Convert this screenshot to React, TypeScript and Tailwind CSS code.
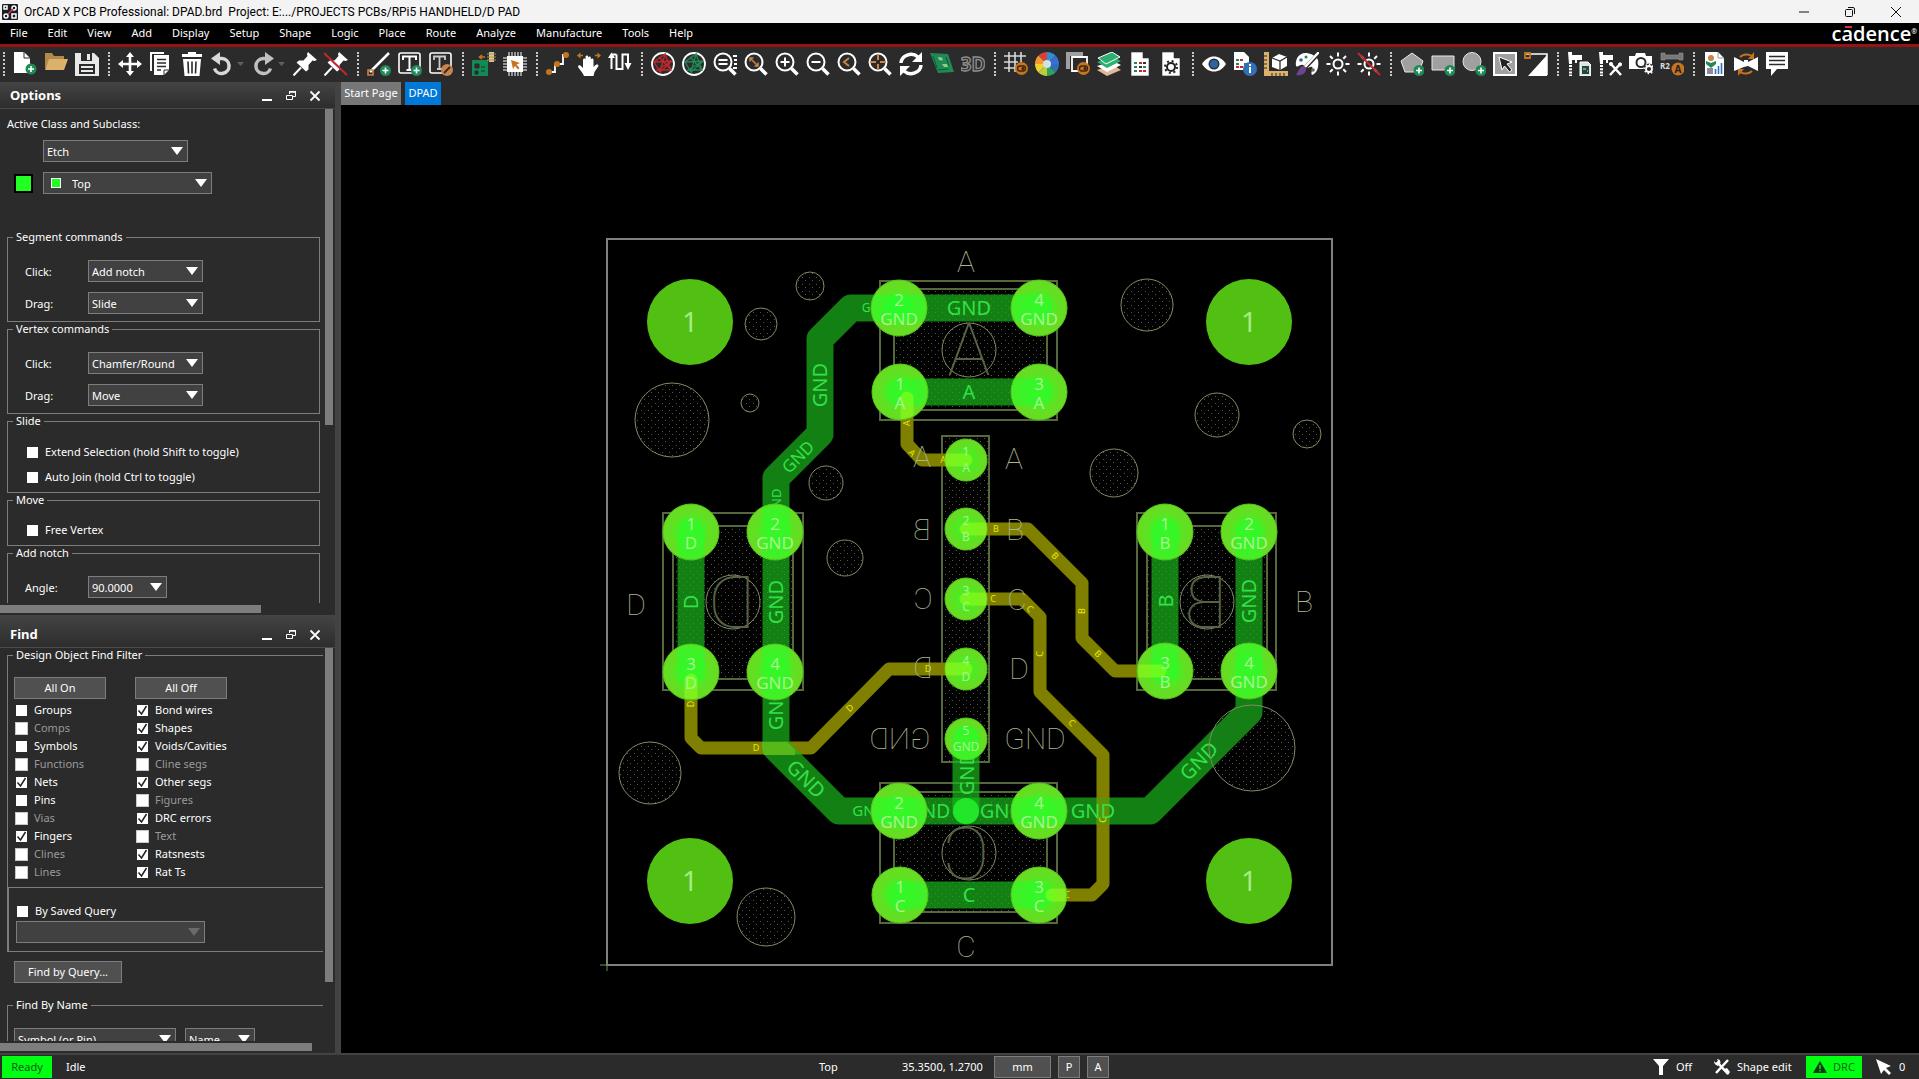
import React, { useState } from "react";

type Pad = {
  x: number;
  y: number;
  pin: string;
  net: string;
  small?: boolean;
};

type Label = [text: string, x: number, y: number, rotate: number, size: number];

const MENUS = [
  "File",
  "Edit",
  "View",
  "Add",
  "Display",
  "Setup",
  "Shape",
  "Logic",
  "Place",
  "Route",
  "Analyze",
  "Manufacture",
  "Tools",
  "Help",
];

/* ---------- toolbar icons, all on a 24x24 grid ---------- */

const Plus = ({ x = 18, y = 18 }) => (
  <g>
    <circle cx={x} cy={y} r="5.5" fill="#1f8a56" />
    <path d={`M${x - 3} ${y}h6M${x} ${y - 3}v6`} stroke="#fff" strokeWidth="1.6" />
  </g>
);

const Lens = ({ children }: { children?: React.ReactNode }) => (
  <g fill="none" stroke="#fff">
    <circle cx="10" cy="10" r="8.5" strokeWidth="2" />
    <path d="M16.500 16.500L22.500 22.500" strokeWidth="3.500" />
    {children}
  </g>
);

const Toggle = () => (
  <g>
    <circle cx="17.500" cy="16.500" r="6.500" fill="#c8741f" />
    <rect x="13.500" y="14" width="8" height="5" rx="2.500" fill="none" stroke="#3a2410" strokeWidth="1.300" />
    <circle cx="19" cy="16.500" r="1.500" fill="#3a2410" />
  </g>
);

const Sun = () => (
  <g fill="none" stroke="#fff" strokeWidth="2">
    <circle cx="12" cy="12" r="4.500" />
    <path d="M12 0.500v4M12 19.500v4M0.500 12h4M19.500 12h4M4 4l2.700 2.700M17.300 17.300L20 20M4 20l2.700-2.700M17.300 6.700L20 4" />
  </g>
);

const Net = ({ color }: { color: string }) => (
  <g fill="none">
    <circle cx="12" cy="12" r="11" stroke="#fff" strokeWidth="1.800" />
    <path
      d="M3 10L14 2L9 20L3 10L21 9L6 18L20 18L14 2M8 5L20 18M21 9L9 20"
      stroke={color}
      strokeWidth="1.300"
    />
  </g>
);

const Caliper = () => (
  <g>
    <path d="M1 0h4v3h10v5h-5v3H8V8H5v4H2z" fill="#fff" />
    <path d="M3.500 13v11" stroke="#fff" strokeWidth="3" strokeDasharray="2 1.200" />
  </g>
);

const Pin = () => (
  <g>
    <path d="M15 0l9 8-2.500 1-2-.5-4 4.500v4.500L13 19.500 3.500 10.500 6 8.500h4.500l4-4.500-.5-2z" fill="#fff" />
    <path d="M8 15.500L0.500 23.500" stroke="#fff" strokeWidth="2" />
  </g>
);

const Page = () => <path d="M3 0h12l6 6v18H3z M15 0v6h6" fill="#fff" stroke="#2b2b2b" strokeWidth="0.600" />;

const ICONS: Record<string, React.ReactNode> = {
  "New drawing": (
    <>
      <path d="M1 0h10l6 6v15H1z" fill="#fff" />
      <path d="M11 0v6h6" fill="none" stroke="#2b2b2b" />
      <Plus x={18} y={17} />
    </>
  ),
  Open: (
    <>
      <path d="M1 17V1h7l2 3h10v4H6z" fill="#b08a48" />
      <path d="M5 7h19l-4 11H1z" fill="#dcb26a" />
    </>
  ),
  Save: (
    <>
      <path d="M0 1h19l5 5v18H0z" fill="#e8e8e8" />
      <path d="M6 1h11v8H6z" fill="#2b2b2b" />
      <path d="M12 2h3v6h-3z" fill="#e8e8e8" />
      <path d="M4 12h16v10H4z" fill="#2b2b2b" />
      <path d="M6 15h12M6 19h12" stroke="#e8e8e8" strokeWidth="2" />
    </>
  ),
  Move: (
    <path
      d="M12 0l4 5h-2.700v5.700H19V8l5 4-5 4v-2.700h-5.700V19H16l-4 5-4-5h2.700v-5.700H5V16l-5-4 5-4v2.700h5.700V5H8z"
      fill="#fff"
    />
  ),
  Copy: (
    <>
      <path d="M1 1h14M2 0v19" stroke="#fff" strokeWidth="2" fill="none" />
      <path d="M5 3h15v15l-5 5H5z" fill="#fff" />
      <path d="M8 7.500h9M8 11h9M8 14.500h9M8 18h4" stroke="#2b2b2b" strokeWidth="1.600" />
      <path d="M15 23v-5h5" fill="none" stroke="#2b2b2b" />
    </>
  ),
  Delete: (
    <>
      <path d="M8 0h8v2h6v3H2V2h6z" fill="#fff" />
      <path d="M3 7h18l-1.500 17h-15z" fill="#fff" />
      <path d="M8 9.500l.5 12M12 9.500v12M16 9.500l-.5 12" stroke="#2b2b2b" strokeWidth="1.600" />
    </>
  ),
  Undo: (
    <>
      <path d="M7 6.500h4a7.500 7.500 0 1 1-7.500 10" fill="none" stroke="#d8d8d8" strokeWidth="3.500" />
      <path d="M9 0v13L0 6.500z" fill="#d8d8d8" />
    </>
  ),
  Redo: (
    <>
      <path d="M15 6.500h-4a7.500 7.500 0 1 0 7.500 10" fill="none" stroke="#c0c0c0" strokeWidth="3.500" />
      <path d="M13 0v13l9-6.500z" fill="#c0c0c0" />
    </>
  ),
  Fix: <Pin />,
  Unfix: (
    <>
      <Pin />
      <path d="M0 1l23 22" stroke="#c4262e" strokeWidth="2" />
    </>
  ),
  "Add line": (
    <>
      <path d="M3 20L22 1" stroke="#fff" strokeWidth="2.500" />
      <path d="M1 18h5v5H1z" fill="none" stroke="#c8844a" strokeWidth="1.600" />
      <Plus x={18.500} y={18.500} />
    </>
  ),
  "Add text": (
    <>
      <rect x="1" y="1" width="21" height="20" rx="2" fill="none" stroke="#fff" strokeWidth="1.600" />
      <path d="M5 8V4.500h13V8M11.500 5v13M8.500 18h6" fill="none" stroke="#fff" strokeWidth="2" />
      <Plus x={18.500} y={18.500} />
    </>
  ),
  "Edit text": (
    <>
      <rect x="1" y="1" width="21" height="20" rx="2" fill="none" stroke="#fff" strokeWidth="1.600" />
      <path d="M5 8V4.500h11V8M10.500 5v12M8 17h5" fill="none" stroke="#ccc" strokeWidth="1.800" />
      <circle cx="18" cy="18" r="6" fill="#c8844a" />
      <path d="M15 21l6-6" stroke="#2b2b2b" strokeWidth="1.800" />
    </>
  ),
  Analyze: (
    <>
      <path d="M0 8h16v16H0z" fill="#128a56" />
      <path d="M3 12h4v4H3zM9 15h4M9 19h4M3 19h3v3H3z" fill="#2b2b2b" stroke="#2b2b2b" />
      <path d="M17 0h5v10h-5z" fill="#d9c9a0" />
      <path d="M15 2h9M15 5h9M15 8h9" stroke="#b09050" />
      <path d="M8 5h5M10 3L7.500 5 10 7" fill="none" stroke="#c8741f" strokeWidth="1.600" />
    </>
  ),
  Component: (
    <>
      <path d="M4 4h16v16H4z" fill="#fff" />
      <path
        d="M6 0v24M9 0v24M12 0v24M15 0v24M18 0v24M0 6h24M0 9h24M0 12h24M0 15h24M0 18h24"
        stroke="#fff"
        strokeWidth="1"
      />
      <path d="M8 8l9 3-3.500 1.500 3 3.500-1.500 1.500-3-3.500L10 17z" fill="#c8741f" />
    </>
  ),
  Connect: (
    <>
      <path d="M3 20h6v-8h8V3h4" fill="none" stroke="#fff" strokeWidth="1.800" />
      <circle cx="3" cy="20" r="3" fill="#c8741f" />
      <circle cx="11" cy="12" r="3" fill="#c8741f" />
      <circle cx="20" cy="3" r="3" fill="#c8741f" />
    </>
  ),
  Slide: (
    <>
      <path
        d="M7 24c-1-3-4-6-6-9 0-2 2-2 3-1l2 2V8c0-2 2.500-2 2.500 0V5c0-2 2.700-2 2.700 0v1c0-2 2.700-2 2.700 0v2c0-2 2.600-2 2.600 0v7l2-2c2-1 3 0 3 1l-4 6-1 4z"
        fill="#fff"
      />
      <path d="M0 3.500l3.500-3v6zM24 3.500l-3.500-3v6z" fill="#c8741f" />
      <path d="M3 3.500h3M18 3.500h3" stroke="#c8741f" strokeWidth="1.500" />
    </>
  ),
  "Delay tune": (
    <>
      <path d="M3.500 18V4M3.500 16.500h6V1.500h6v15h4.500V8" fill="none" stroke="none" />
      <path d="M3.500 17V5M8.500 2.500v14.500h6V2.500h5.500V12M3.500 2.500h5" fill="none" stroke="#fff" strokeWidth="2" />
      <path d="M0 6l3.500-5.500L7 6zM16.500 11h7L20 18z" fill="#fff" />
    </>
  ),
  "Unrats all": <Net color="#c4262e" />,
  "Rats all": <Net color="#1f8a56" />,
  "Zoom points": (
    <Lens>
      <path d="M5.500 8h9M5.500 12h9M20 4h4M21 8h3M21 12h3M20 16h4" strokeWidth="1.800" />
    </Lens>
  ),
  "Zoom fit": (
    <Lens>
      <path d="M6 6l8 8M6 9.500V6h3.500M14 10.500V14h-3.500" stroke="#c8844a" strokeWidth="1.500" />
    </Lens>
  ),
  "Zoom in": (
    <Lens>
      <path d="M5.500 10h9M10 5.500v9" strokeWidth="2" />
    </Lens>
  ),
  "Zoom out": (
    <Lens>
      <path d="M5.500 10h9" strokeWidth="2" />
    </Lens>
  ),
  "Zoom previous": (
    <Lens>
      <path d="M12 6l-5 4 5 4" stroke="#c8844a" strokeWidth="2" />
    </Lens>
  ),
  "Zoom selection": (
    <Lens>
      <path d="M10 2v6M10 12v6M2 10h6M12 10h6" stroke="#c8844a" strokeWidth="2" />
    </Lens>
  ),
  Redraw: (
    <>
      <path d="M2 11A10 9 0 0 1 19 5M22 13A10 9 0 0 1 5 19" fill="none" stroke="#fff" strokeWidth="3.500" />
      <path d="M23 0v10H13zM1 24V14h10z" fill="#fff" />
    </>
  ),
  "Flip design": (
    <>
      <path d="M0 1l18 1 6 18-16 1z" fill="#1f8a56" />
      <path d="M8 5l4 .5 1 3-4-.5zM12 12h5l1 3h-4z" fill="#8fd080" />
      <path d="M3 4l4 12M16 5l3 9M8 18l10-1" stroke="#0d5a36" />
    </>
  ),
  "3D canvas": (
    <text
      x="12"
      y="19"
      textAnchor="middle"
      fill="#2b2b2b"
      stroke="#8a8a8a"
      strokeWidth="1.400"
      fontSize="19"
      fontWeight="700"
      fontFamily="Open Sans, sans-serif"
    >
      3D
    </text>
  ),
  "Grid toggle": (
    <>
      <path d="M5 0v20M11 0v20M17 0v10M0 4h22M0 10h14M0 16h11" stroke="#d8d8d8" strokeWidth="1.600" />
      <Toggle />
    </>
  ),
  Color: (
    <>
      <path d="M12 12V0a12 12 0 0 1 8.500 3.500z" fill="#2f8fd0" />
      <path d="M12 12l8.500-8.500A12 12 0 0 1 24 12z" fill="#3a6fd0" />
      <path d="M12 12h12a12 12 0 0 1-3.500 8.500z" fill="#2f70b8" />
      <path d="M12 12l8.500 8.500A12 12 0 0 1 12 24z" fill="#35a05a" />
      <path d="M12 12v12a12 12 0 0 1-8.500-3.500z" fill="#b8d040" />
      <path d="M12 12l-8.500 8.500A12 12 0 0 1 0 12z" fill="#f0d030" />
      <path d="M12 12H0a12 12 0 0 1 3.500-8.500z" fill="#f09a30" />
      <path d="M12 12L3.500 3.500A12 12 0 0 1 12 0z" fill="#d9403a" />
      <circle cx="12" cy="12" r="4" fill="#cfe0ee" />
    </>
  ),
  Shadow: (
    <>
      <path d="M0 0h17v4H4v13H0z" fill="#a0a0a0" />
      <path d="M6 5h15v14H6z" fill="none" stroke="#fff" strokeWidth="1.800" />
      <Toggle />
    </>
  ),
  "Cross section": (
    <>
      <path d="M0 18l16-5 8 5-14 6z" fill="#e0b898" />
      <path d="M0 14l16-5 8 4-14 7z" fill="#fff" />
      <path d="M0 10l16-5 8 4-14 7z" fill="#2cb070" />
      <path d="M1 6l14-6 8 5-14 7z" fill="#2cb070" stroke="#fff" />
    </>
  ),
  Report: (
    <>
      <Page />
      <path d="M6 11h3M6 15h3M6 19h3M15 15h3" stroke="#1f8a56" strokeWidth="2.200" />
      <path d="M11 11h3M11 19h3M15 19h3" stroke="#c4262e" strokeWidth="2.200" />
      <path d="M15 11h3M11 15h3" stroke="#333" strokeWidth="2.200" />
    </>
  ),
  Parameters: (
    <>
      <Page />
      <circle cx="12" cy="15" r="4" fill="none" stroke="#222" strokeWidth="2" />
      <circle cx="12" cy="15" r="6" fill="none" stroke="#222" strokeWidth="2" strokeDasharray="2 2.700" />
    </>
  ),
  Visibility: (
    <>
      <path d="M0 12C6 2 18 2 24 12 18 22 6 22 0 12z" fill="#fff" />
      <circle cx="12" cy="12" r="5.500" fill="#2a3038" />
      <circle cx="12" cy="12" r="4" fill="#2f62a8" />
    </>
  ),
  "Show element": (
    <>
      <path d="M1 0h10l5 5v13H1z" fill="#fff" />
      <path d="M3 8h3M3 12h3M11 12h3" stroke="#1f8a56" strokeWidth="2" />
      <path d="M7 8h3M7 15h3M3 15h3" stroke="#c4262e" strokeWidth="2" />
      <circle cx="17" cy="17" r="7" fill="#2f70b8" />
      <path d="M17 15v6M17 12v2" stroke="#fff" strokeWidth="2" />
    </>
  ),
  Measure: (
    <>
      <path d="M0 0h5v19h19v5H0z" fill="#dcb26a" />
      <path d="M0 4h3M0 8h3M0 12h3M0 16h3M8 21v3M12 21v3M16 21v3M20 21v3" stroke="#2b2b2b" />
      <path d="M8 6l7-4 8 3v9l-7 4-8-3z" fill="#fff" />
      <path d="M8 6l8 3 7-4M16 9v9" fill="none" stroke="#2b2b2b" strokeWidth="1.300" />
    </>
  ),
  Palette: (
    <>
      <path d="M12 1C4 0 0 7 1 14c2 2 4-2 7-1s2 3 4 3 3-2 5-1-2 6 0 8c6-2 7-10 6-15-2-4-6-6-11-7z" fill="#fff" />
      <circle cx="6" cy="8" r="1.800" fill="#2f62a8" />
      <circle cx="11" cy="5" r="1.500" fill="#1f8a56" />
      <circle cx="18" cy="18" r="1.800" fill="#666" />
      <path d="M24 1L9 17" stroke="#2b2b2b" strokeWidth="4" />
      <path d="M24 0L10 15" stroke="#fff" strokeWidth="2.500" />
      <path d="M9 14c-4 0-5 4-8 9 5 1 10-1 10-6z" fill="#6b4590" />
    </>
  ),
  Highlight: <Sun />,
  Dehighlight: (
    <>
      <Sun />
      <path d="M1 1l22 22" stroke="#c4262e" strokeWidth="2" />
    </>
  ),
  "Add polygon": (
    <>
      <path d="M12 1l11 8-4 11H5L1 9z" fill="#a0a0a0" stroke="#e8e8e8" />
      <Plus x={19} y={18.500} />
    </>
  ),
  "Add rectangle": (
    <>
      <path d="M1 4h22v14H1z" fill="#a0a0a0" stroke="#e8e8e8" />
      <Plus x={19} y={18.500} />
    </>
  ),
  "Add circle": (
    <>
      <circle cx="10" cy="9.500" r="9" fill="#a0a0a0" stroke="#e8e8e8" />
      <Plus x={19} y={18.500} />
    </>
  ),
  "Select shape": (
    <>
      <path d="M1 1h22v22H1z" fill="#a0a0a0" stroke="#fff" strokeWidth="2" />
      <path d="M6 5l13 5-5 2 5 6-2.500 2-5-6-2.500 4z" fill="#222" stroke="#fff" />
    </>
  ),
  "Void shape": (
    <>
      <path d="M2 2h21v21" fill="none" stroke="#fff" strokeWidth="1.500" />
      <path d="M23 3v21H4z" fill="#fff" />
      <path d="M1 1h5v5H1z" fill="none" stroke="#c8741f" strokeWidth="1.800" />
    </>
  ),
  "Measure report": (
    <>
      <Caliper />
      <path d="M13 10h8l3 3v11H13z" fill="#d8e8e0" stroke="#fff" />
      <path d="M15 14h7v8h-7z" fill="#24483a" />
      <path d="M16 17h3M20 19h1" stroke="#cfe0d8" />
    </>
  ),
  "Measure tools": (
    <>
      <Caliper />
      <path d="M12 11l11 12M23 11L12 23" stroke="#fff" strokeWidth="2.500" />
      <circle cx="13" cy="12" r="2" fill="#fff" />
      <circle cx="22" cy="12.500" r="2" fill="#fff" />
    </>
  ),
  Snapshot: (
    <>
      <path d="M0 4h6l1-3h9l1 3h6v13H0z" fill="#fff" />
      <circle cx="12" cy="10.500" r="4.500" fill="none" stroke="#2b2b2b" strokeWidth="2" />
      <circle cx="20" cy="17" r="5.500" fill="#2b2b2b" />
      <circle cx="20" cy="17" r="3" fill="none" stroke="#fff" strokeWidth="1.800" />
      <circle cx="20" cy="17" r="4.600" fill="none" stroke="#fff" strokeDasharray="1.500 2" strokeWidth="1.500" />
    </>
  ),
  "Rename refdes": (
    <>
      <path d="M1 1h4v2h14V1h4v7h-4V7H5v1H1z" fill="#777" stroke="#999" strokeWidth="0.600" />
      <text x="0" y="17" fill="#ddd" fontSize="8" fontWeight="700" fontFamily="Open Sans, sans-serif">
        R2
      </text>
      <circle cx="18" cy="17" r="6.500" fill="#c8741f" />
      <text x="18" y="21" textAnchor="middle" fill="#222" fontSize="10" fontWeight="700" fontFamily="Open Sans, sans-serif">
        A
      </text>
    </>
  ),
  Dashboard: (
    <>
      <path d="M2 0h13l6 6v18H2z" fill="#fff" />
      <path d="M15 0v6h6" fill="none" stroke="#999" />
      <circle cx="8" cy="6" r="3" fill="#c8844a" />
      <path d="M3 9l5 2 5-2v3l-5 4-5-4z" fill="#1f8a56" />
      <path d="M4 16h6v6H4z" fill="#8a8a9a" />
      <path d="M12.500 17v5M15.500 14v8M18.500 11v11" stroke="#2f70b8" strokeWidth="1.600" />
    </>
  ),
  Sync: (
    <>
      <path d="M0 5l10 5V8l4 0v2l10-5v14l-10-5-4 1L0 19z" fill="#fff" />
      <path d="M6 5a8 6 0 0 1 12-1M18 19a8 6 0 0 1-12 1" fill="none" stroke="#c8741f" strokeWidth="2" />
      <path d="M20 0v7h-6zM4 24v-7h6z" fill="#c8741f" />
    </>
  ),
  Comment: (
    <>
      <path d="M1 0h22v17H12l-6 7v-7H1z" fill="#fff" />
      <path d="M4 4.500h16M4 8.500h16M4 12.500h16" stroke="#2b2b2b" strokeWidth="1.300" />
    </>
  ),
};

const TOOL_GROUPS = [
  ["New drawing", "Open", "Save"],
  ["Move", "Copy", "Delete", "Undo", "Redo", "Fix", "Unfix"],
  ["Add line", "Add text", "Edit text"],
  ["Analyze", "Component"],
  ["Connect", "Slide", "Delay tune"],
  [
    "Unrats all",
    "Rats all",
    "Zoom points",
    "Zoom fit",
    "Zoom in",
    "Zoom out",
    "Zoom previous",
    "Zoom selection",
    "Redraw",
    "Flip design",
    "3D canvas",
  ],
  ["Grid toggle", "Color", "Shadow", "Cross section", "Report", "Parameters"],
  ["Visibility", "Show element", "Measure", "Palette", "Highlight", "Dehighlight"],
  ["Add polygon", "Add rectangle", "Add circle", "Select shape", "Void shape"],
  ["Measure report", "Measure tools", "Snapshot", "Rename refdes"],
  ["Dashboard", "Sync", "Comment"],
];

const ToolBar = () => (
  <div className="flex h-[35px] shrink-0 bg-[#2b2b2b] pl-[3px] pt-[5px]">
    {TOOL_GROUPS.map((group) => (
      <div key={group[0]} className="mr-[9px] flex items-start gap-[7px]">
        <span className="mr-px h-6 border-l-2 border-dotted border-[#c8c8c8]" />
        {group.map((name) => (
          <button key={name} type="button" aria-label={name} className="flex h-6 items-center">
            <svg viewBox="0 0 24 24" className="size-6">
              {ICONS[name]}
            </svg>
            {(name === "Undo" || name === "Redo") && (
              <svg viewBox="0 0 10 10" className="size-[10px]">
                <path d="M2 3h7L5.500 7z" fill="#5f5f5f" />
              </svg>
            )}
          </button>
        ))}
      </div>
    ))}
  </div>
);

/* ---------- dock panel pieces ---------- */

const PanelHeader = ({ title, className = "h-[27px] pt-[2px]" }: { title: string; className?: string }) => (
  <header
    className={`flex shrink-0 items-center border-b border-[#4a4a4a] bg-linear-to-b from-[#444444] to-[#2d2d2d] pl-[10px] pr-[14px] ${className}`}
  >
    <h2 className="flex-1 text-[13px] font-bold">{title}</h2>
    <div className="flex items-center gap-3">
      <button type="button" aria-label={`Minimize ${title}`}>
        <svg viewBox="0 0 12 12" className="size-3">
          <path d="M1 10h10" stroke="#fff" strokeWidth="2" />
        </svg>
      </button>
      <button type="button" aria-label={`Float ${title}`}>
        <svg viewBox="0 0 12 12" className="size-3">
          <path d="M4.500 4V1.500h6v5H8" fill="none" stroke="#fff" />
          <path d="M4 2h7" stroke="#fff" strokeWidth="1.500" />
          <path d="M1.500 5.500h6v4h-6z" fill="none" stroke="#fff" />
        </svg>
      </button>
      <button type="button" aria-label={`Close ${title}`}>
        <svg viewBox="0 0 12 12" className="size-3">
          <path d="M1.500 1.500l9 9M10.500 1.500l-9 9" stroke="#fff" strokeWidth="1.800" />
        </svg>
      </button>
    </div>
  </header>
);

const Dropdown = ({
  id,
  value,
  label,
  className,
  selectClass = "pl-[3px]",
  disabled,
}: {
  id: string;
  value: string;
  label?: string;
  className: string;
  selectClass?: string;
  disabled?: boolean;
}) => (
  <div className={`relative h-[22px] shrink-0 ${className}`}>
    <select
      id={id}
      aria-label={label}
      disabled={disabled}
      className={`h-[22px] w-full appearance-none border border-[#7d7d7d] bg-[#414141] pr-5 pt-[2px] text-[11px] text-white outline-none ${selectClass}`}
    >
      <option>{value}</option>
    </select>
    <svg viewBox="0 0 12 8" className="pointer-events-none absolute right-[5px] top-[7px] h-2 w-3">
      <path d="M0 0h12L6 8z" fill={disabled ? "#6a6a6a" : "#fff"} />
    </svg>
  </div>
);

const Field = ({ label, id, value, className = "w-[115px]" }: { label: string; id: string; value: string; className?: string }) => (
  <div className="flex items-center">
    <label htmlFor={id} className="w-[63px] pt-[2px]">
      {label}
    </label>
    <Dropdown id={id} value={value} className={className} />
  </div>
);

const Check = ({
  label,
  checked = false,
  disabled = false,
}: {
  label: string;
  checked?: boolean;
  disabled?: boolean;
}) => {
  const [on, setOn] = useState(checked);

  return (
    <label className={`flex items-center ${disabled ? "text-[#9a9a9a]" : ""}`}>
      <span className="relative mr-[6px] flex size-[13px] items-center justify-center">
        <input
          type="checkbox"
          checked={on}
          disabled={disabled}
          onChange={() => setOn(!on)}
          className="size-[11px] appearance-none bg-white disabled:size-[13px] disabled:border disabled:border-[#c8c8c8]"
        />
        {on && (
          <svg viewBox="0 0 11 11" className="pointer-events-none absolute size-[11px]">
            <path d="M1.500 5.500l3 3.500 5-8" fill="none" stroke="#222" strokeWidth="1.500" />
          </svg>
        )}
      </span>
      {label}
    </label>
  );
};

const Group = ({
  title,
  className = "",
  bodyClass = "",
  children,
}: {
  title: string;
  className?: string;
  bodyClass?: string;
  children: React.ReactNode;
}) => (
  <fieldset className={`border border-[#7d7d7d] ${className}`}>
    <legend className="ml-[5px] px-[3px] leading-[14px]">{title}</legend>
    <div className={bodyClass}>{children}</div>
  </fieldset>
);

const ScrollArea = ({ vertical, horizontal, children }: { vertical: string; horizontal: string; children: React.ReactNode }) => (
  <>
    <div className="flex min-h-0 flex-1">
      <div className="min-w-0 flex-1 overflow-hidden">{children}</div>
      <div className="w-[10px] shrink-0">
        <div className={`w-2 bg-[#7d7d7d] ${vertical}`} />
      </div>
    </div>
    <div className="h-3 shrink-0 pt-[2px]">
      <div className={`h-2 bg-[#7d7d7d] ${horizontal}`} />
    </div>
  </>
);

const FILTERS_LEFT = [
  { label: "Groups" },
  { label: "Comps", disabled: true },
  { label: "Symbols" },
  { label: "Functions", disabled: true },
  { label: "Nets", checked: true },
  { label: "Pins" },
  { label: "Vias", disabled: true },
  { label: "Fingers", checked: true },
  { label: "Clines", disabled: true },
  { label: "Lines", disabled: true },
];

const FILTERS_RIGHT = [
  { label: "Bond wires", checked: true },
  { label: "Shapes", checked: true },
  { label: "Voids/Cavities", checked: true },
  { label: "Cline segs", disabled: true },
  { label: "Other segs", checked: true },
  { label: "Figures", disabled: true },
  { label: "DRC errors", checked: true },
  { label: "Text", disabled: true },
  { label: "Ratsnests", checked: true },
  { label: "Rat Ts", checked: true },
];

const OptionsPanel = () => (
  <section className="flex min-h-0 flex-[533_1_0%] flex-col">
    <PanelHeader title="Options" />
    <ScrollArea vertical="h-[64%]" horizontal="w-[78%]">
      <div className="pl-[7px] pr-[5px] pt-[7px]">
        <p className="leading-4">Active Class and Subclass:</p>
        <Dropdown id="class" label="Class" value="Etch" className="ml-9 mt-2 w-[145px]" />
        <div className="mt-[10px] flex items-center">
          <span className="ml-[7px] mr-[10px] size-[19px] border-2 border-black bg-[#22ff22]" />
          <div className="relative">
            <Dropdown id="subclass" label="Subclass" value="Top" className="w-[169px]" selectClass="pl-7" />
            <span className="absolute left-2 top-[6px] size-[10px] border border-white bg-[#22ff22]" />
          </div>
        </div>
        <Group title="Segment commands" className="mt-9" bodyClass="flex flex-col gap-[10px] pb-[7px] pl-[17px] pt-4">
          <Field id="seg-click" label="Click:" value="Add notch" />
          <Field id="seg-drag" label="Drag:" value="Slide" />
        </Group>
        <Group title="Vertex commands" bodyClass="flex flex-col gap-[10px] pb-[7px] pl-[17px] pt-4">
          <Field id="ver-click" label="Click:" value="Chamfer/Round" />
          <Field id="ver-drag" label="Drag:" value="Move" />
        </Group>
        <Group title="Slide" bodyClass="flex flex-col gap-[9px] pb-[7px] pl-[18px] pt-4 leading-4">
          <Check label="Extend Selection (hold Shift to toggle)" />
          <Check label="Auto Join (hold Ctrl to toggle)" />
        </Group>
        <Group title="Move" bodyClass="pb-[7px] pl-[18px] pt-[15px] leading-4">
          <Check label="Free Vertex" />
        </Group>
        <Group title="Add notch" bodyClass="pb-[20px] pl-[17px] pt-4">
          <Field id="angle" label="Angle:" value="90.0000" className="w-[79px]" />
        </Group>
      </div>
    </ScrollArea>
  </section>
);

const FindPanel = () => (
  <section className="flex min-h-0 flex-[438_1_0%] flex-col">
    <PanelHeader title="Find" className="h-[33px] pt-2" />
    <ScrollArea vertical="h-[85%]" horizontal="w-[93%]">
      <div className="pl-[7px] pr-[2px]">
        <Group title="Design Object Find Filter" className="border-r-0" bodyClass="pt-[15px]">
          <div className="grid w-[248px] grid-cols-2 pl-[6px]">
            <button type="button" className="h-[22px] w-[92px] border border-[#7d7d7d] bg-[#505050]">
              All On
            </button>
            <button type="button" className="h-[22px] w-[92px] border border-[#7d7d7d] bg-[#505050]">
              All Off
            </button>
            {[FILTERS_LEFT, FILTERS_RIGHT].map((list, i) => (
              <div key={i} className="pl-px pt-[2px] leading-[18px]">
                {list.map((f) => (
                  <Check key={f.label} {...f} />
                ))}
              </div>
            ))}
          </div>
          <div className="mt-[6px] border-l border-t border-[#7d7d7d] pb-2 pl-[7px] pt-[15px] leading-4">
            <Check label="By Saved Query" />
            <Dropdown id="query" label="Saved query" value="" disabled className="mt-[2px] w-[189px]" />
          </div>
        </Group>
        <button type="button" className="ml-[7px] mt-[9px] h-[22px] w-[108px] border border-[#7d7d7d] bg-[#505050]">
          Find by Query...
        </button>
        <Group title="Find By Name" className="mt-[15px] border-r-0" bodyClass="flex gap-[9px] pb-3 pl-[6px] pt-4">
          <Dropdown id="name-type" label="Find type" value="Symbol (or Pin)" className="w-[162px]" />
          <Dropdown id="name-kind" label="Find by" value="Name" className="w-[70px]" />
        </Group>
      </div>
    </ScrollArea>
  </section>
);

/* ---------- board drawing ---------- */

const HOLES = [
  [810, 286, 14],
  [761, 324, 16],
  [672, 420, 37],
  [750, 403, 9],
  [826, 483, 17],
  [845, 558, 18],
  [650, 773, 31],
  [766, 917, 29],
  [1147, 305, 26],
  [1217, 415, 22],
  [1307, 434, 14],
  [1114, 473, 24],
  [1252, 748, 43],
];

const MOUNTS = [
  [690, 322],
  [1249, 322],
  [690, 881],
  [1249, 881],
];

// x, y, width, height of the outer body and of the inner outline
const BODIES = [
  [880, 281, 177, 139, 894, 289, 153, 121],
  [663, 513, 140, 177, 673, 526, 120, 153],
  [1137, 513, 139, 177, 1147, 526, 120, 153],
  [880, 783, 177, 140, 894, 792, 153, 120],
];

const TOP_TRACKS = [
  "M899 308H851L820 339V434L776 478V748L839 811H1150L1249 712V532",
  "M899 308H1039",
  "M900 392H1039",
  "M691 532V672",
  "M1165 532V671",
  "M900 895H1039",
  "M966 739V811",
];

const BOTTOM_TRACKS = [
  "M907 398V444L922 460H966",
  "M966 529H1028L1082 583V638L1115 671H1160",
  "M966 599H1022L1040 617V692L1103 755V884L1092 895H1052",
  "M691 680V738L701 748H811L889 669H966",
];

const PADS: Pad[] = [
  { x: 899, y: 308, pin: "2", net: "GND" },
  { x: 1039, y: 308, pin: "4", net: "GND" },
  { x: 900, y: 392, pin: "1", net: "A" },
  { x: 1039, y: 392, pin: "3", net: "A" },
  { x: 691, y: 532, pin: "1", net: "D" },
  { x: 775, y: 532, pin: "2", net: "GND" },
  { x: 691, y: 672, pin: "3", net: "D" },
  { x: 775, y: 672, pin: "4", net: "GND" },
  { x: 1165, y: 532, pin: "1", net: "B" },
  { x: 1249, y: 532, pin: "2", net: "GND" },
  { x: 1165, y: 671, pin: "3", net: "B" },
  { x: 1249, y: 671, pin: "4", net: "GND" },
  { x: 899, y: 811, pin: "2", net: "GND" },
  { x: 1039, y: 811, pin: "4", net: "GND" },
  { x: 900, y: 895, pin: "1", net: "C" },
  { x: 1039, y: 895, pin: "3", net: "C" },
  { x: 966, y: 460, pin: "1", net: "A", small: true },
  { x: 966, y: 529, pin: "2", net: "B", small: true },
  { x: 966, y: 599, pin: "3", net: "C", small: true },
  { x: 966, y: 669, pin: "4", net: "D", small: true },
  { x: 966, y: 739, pin: "5", net: "GND", small: true },
];

const TOP_LABELS: Label[] = [
  ["G", 866, 308, 0, 12],
  ["GND", 969, 308, 0, 20],
  ["A", 969, 392, 0, 20],
  ["GND", 820, 385, -90, 20],
  ["GND", 798, 457, -45, 17],
  ["GND", 776, 503, -90, 13],
  ["D", 691, 602, -90, 20],
  ["GND", 776, 602, -90, 20],
  ["GND", 776, 708, -90, 20],
  ["GND", 806, 779, 45, 20],
  ["GND", 869, 811, 0, 15],
  ["GND", 929, 811, 0, 19],
  ["GND", 1002, 811, 0, 20],
  ["GND", 1093, 811, 0, 20],
  ["GND", 967, 773, -90, 20],
  ["GND", 1199, 761, -45, 20],
  ["B", 1166, 601, -90, 20],
  ["GND", 1249, 601, -90, 20],
  ["C", 969, 895, 0, 20],
];

const BOTTOM_LABELS: Label[] = [
  ["A", 907, 423, -90, 9],
  ["A", 912, 453, 45, 9],
  ["A", 943, 460, 0, 9],
  ["B", 996, 529, 0, 9],
  ["B", 1055, 556, 45, 9],
  ["B", 1082, 611, -90, 9],
  ["B", 1098, 654, 45, 9],
  ["B", 1145, 671, 0, 9],
  ["C", 993, 599, 0, 9],
  ["C", 1030, 609, 45, 9],
  ["C", 1040, 654, -90, 9],
  ["C", 1072, 723, 45, 9],
  ["C", 1103, 820, -90, 9],
  ["C", 1067, 895, 0, 9],
  ["D", 691, 704, -90, 9],
  ["D", 756, 748, 0, 9],
  ["D", 850, 708, -45, 9],
  ["D", 928, 669, 0, 9],
];

const SILK: [string, number, number, number, boolean?][] = [
  ["A", 966, 261, 30],
  ["A", 969, 349, 72],
  ["D", 636, 604, 30],
  ["B", 1304, 601, 30],
  ["C", 966, 946, 30],
  ["A", 1014, 458, 30],
  ["B", 1015, 529, 30],
  ["C", 1017, 599, 30],
  ["D", 1019, 668, 30],
  ["GND", 1035, 738, 30],
  ["A", 922, 456, 30, true],
  ["B", 922, 529, 30, true],
  ["C", 923, 598, 30, true],
  ["D", 923, 667, 30, true],
  ["GND", 900, 738, 30, true],
  ["D", 732, 602, 72, true],
  ["B", 1206, 602, 72, true],
  ["C", 966, 853, 72, true],
];

const LabelText = ({ label: [text, x, y, rotate, size] }: { label: Label }) => (
  <text
    transform={`translate(${x} ${y}) rotate(${rotate})`}
    textAnchor="middle"
    y={Math.round(size * 0.36)}
    fontSize={size}
  >
    {text}
  </text>
);

const Board = () => (
  <svg
    viewBox="341 105 1578 948"
    className="block h-full w-full"
    fontFamily="'Noto Sans', 'Open Sans', sans-serif"
    role="img"
    aria-label="DPAD board"
  >
    <defs>
      <pattern id="dots" width="7" height="7" patternUnits="userSpaceOnUse">
        <rect width="1" height="1" fill="#4c5c3c" />
        <rect x="4" y="4" width="1" height="1" fill="#4c5c3c" />
      </pattern>
      <radialGradient id="pad">
        <stop offset="0" stopColor="#4cf022" />
        <stop offset="0.500" stopColor="#50ea22" />
        <stop offset="0.800" stopColor="#66dd22" />
      </radialGradient>
      <clipPath id="padclip">
        {PADS.map((p) => (
          <circle key={`${p.x}-${p.y}`} cx={p.x} cy={p.y} r={p.small ? 21 : 27} />
        ))}
      </clipPath>
    </defs>

    {/* bodies and header outline */}
    <g fill="none" stroke="#56683c" strokeWidth="2">
      {BODIES.map(([x, y, w, h, ix, iy, iw, ih]) => (
        <React.Fragment key={`${x}-${y}`}>
          <rect x={x} y={y} width={w} height={h} />
          <rect x={ix} y={iy} width={iw} height={ih} fill="url(#dots)" />
        </React.Fragment>
      ))}
      <rect x="942" y="436" width="47" height="326" fill="url(#dots)" />
    </g>

    {/* bottom etch, then top etch over it */}
    <g fill="none" stroke="#808000" strokeWidth="13" strokeLinecap="round" strokeLinejoin="round">
      {BOTTOM_TRACKS.map((d) => (
        <path key={d} d={d} />
      ))}
    </g>
    <g fill="none" stroke="#1ab61a" strokeOpacity="0.700" strokeWidth="27" strokeLinecap="round" strokeLinejoin="round">
      {TOP_TRACKS.map((d) => (
        <path key={d} d={d} />
      ))}
    </g>
    {/* where the two etch layers cross */}
    <path d="M762 742H787L795 750V755H764L762 748Z" fill="#58b81a" />
    <circle cx="966" cy="811" r="13" fill="#22e62a" />
    <path d="M1103 797V825" stroke="#808000" strokeOpacity="0.500" strokeWidth="13" />

    <g fill="#33e04a">
      {TOP_LABELS.map((l, i) => (
        <LabelText key={i} label={l} />
      ))}
    </g>
    <g fill="#e8e800">
      {BOTTOM_LABELS.map((l, i) => (
        <LabelText key={i} label={l} />
      ))}
    </g>

    {/* pads */}
    {PADS.map((p) => (
      <circle key={`${p.x}-${p.y}`} cx={p.x} cy={p.y} r={p.small ? 21 : 28} fill="url(#pad)" stroke="#55c81c" />
    ))}
    <g clipPath="url(#padclip)" fill="none" strokeLinecap="round" strokeLinejoin="round">
      <g stroke="#22ff2c" strokeOpacity="0.550" strokeWidth="27">
        {TOP_TRACKS.map((d) => (
          <path key={d} d={d} />
        ))}
      </g>
      <g stroke="#a0ff18" strokeOpacity="0.500" strokeWidth="13">
        {BOTTOM_TRACKS.map((d) => (
          <path key={d} d={d} />
        ))}
      </g>
    </g>
    <g fill="#a8f58c" textAnchor="middle">
      {PADS.map((p) => (
        <React.Fragment key={`${p.x}-${p.y}`}>
          <text x={p.x} y={p.y - (p.small ? 4 : 2)} fontSize={p.small ? 12 : 17}>
            {p.pin}
          </text>
          <text x={p.x} y={p.y + (p.small ? 12 : 17)} fontSize={p.small ? 12 : 17}>
            {p.net}
          </text>
        </React.Fragment>
      ))}
    </g>

    {/* mounting holes */}
    {MOUNTS.map(([x, y]) => (
      <g key={`${x}-${y}`}>
        <circle cx={x} cy={y} r="43" fill="#52c013" />
        <text x={x} y={y + 10} textAnchor="middle" fontSize="28" fill="#a8ea84">
          1
        </text>
      </g>
    ))}

    {/* drill keepouts */}
    <g fill="url(#dots)" stroke="#808c64">
      {HOLES.map(([x, y, r]) => (
        <circle key={`${x}-${y}`} cx={x} cy={y} r={r} />
      ))}
      <circle cx="969" cy="350" r="27" fill="none" />
      <circle cx="733" cy="602" r="27" fill="none" />
      <circle cx="1207" cy="602" r="27" fill="none" />
      <circle cx="969" cy="853" r="27" fill="none" />
    </g>

    {/* silkscreen, mirrored on the bottom side */}
    <g textAnchor="middle" fontFamily="Roboto, Lato, sans-serif" fontWeight="100">
      {SILK.map(([text, x, y, size, mirror], i) => (
        <text
          key={i}
          transform={`translate(${x} ${y}) scale(${mirror ? -1 : 1} 1)`}
          y={Math.round(size * 0.36)}
          fontSize={size}
          fill={size > 40 ? "#586246" : "#aab690"}
        >
          {text}
        </text>
      ))}
    </g>

    <rect x="607" y="239" width="725" height="726" fill="none" stroke="#808080" strokeWidth="2" />
    <path d="M600 965h13M607 959v12" stroke="#6f8f5a" strokeWidth="1" />
  </svg>
);

/* ---------- page ---------- */

const TitleBar = () => (
  <div className="flex h-[23px] shrink-0 items-center bg-[#f3f3f3] pl-[2px] text-black">
    <svg viewBox="0 0 16 16" className="size-4">
      <rect width="16" height="16" rx="1" fill="#1c1c24" />
      <g fill="none" stroke="#fff" strokeWidth="1.500">
        <rect x="2" y="2" width="3" height="3" />
        <circle cx="12" cy="4" r="2" />
        <circle cx="4" cy="12" r="2" />
        <rect x="10" y="10" width="4" height="4" />
      </g>
      <path d="M6 10l5-5" stroke="#e03040" strokeWidth="1.500" />
    </svg>
    <h1 className="ml-[6px] flex-1 whitespace-pre font-['Roboto',sans-serif] text-[12px]">
      {"OrCAD X PCB Professional: DPAD.brd  Project: E:.../PROJECTS PCBs/RPi5 HANDHELD/D PAD"}
    </h1>
    <div className="flex">
      <button type="button" aria-label="Minimize" className="flex w-[46px] justify-center">
        <svg viewBox="0 0 12 12" className="size-3">
          <path d="M1 6h10" stroke="#111" />
        </svg>
      </button>
      <button type="button" aria-label="Restore" className="flex w-[46px] justify-center">
        <svg viewBox="0 0 12 12" className="size-3">
          <rect x="1.500" y="3.500" width="7" height="7" rx="1" fill="none" stroke="#111" />
          <path d="M4 1.500h5a1.500 1.500 0 0 1 1.500 1.500v5" fill="none" stroke="#111" />
        </svg>
      </button>
      <button type="button" aria-label="Close" className="flex w-[46px] justify-center">
        <svg viewBox="0 0 12 12" className="size-3">
          <path d="M1 1l10 10M11 1L1 11" stroke="#111" />
        </svg>
      </button>
    </div>
  </div>
);

const MenuBar = () => (
  <nav className="flex h-6 shrink-0 items-center border-b-[3px] border-[#961414] bg-black pl-[10px] pr-[2px]">
    <div className="flex flex-1 gap-5">
      {MENUS.map((m) => (
        <button key={m} type="button">
          {m}
        </button>
      ))}
    </div>
    <div className="relative flex items-start font-['Open_Sans',sans-serif] text-[20px] font-semibold leading-5">
      cadence
      <sup className="top-1 text-[7px] leading-none">®</sup>
      <span className="absolute left-[13px] top-[2px] h-[2px] w-[7px] bg-[#d03040]" />
    </div>
  </nav>
);

const StatusBar = () => (
  <footer className="flex h-[26px] shrink-0 items-center border-t-2 border-[#434343] bg-[#2b2b2b] pl-[2px] pr-3">
    <span className="flex h-[22px] w-[50px] items-center justify-center bg-[#00ff11] text-[#0b5a10]">Ready</span>
    <span className="ml-[14px] w-[753px] shrink">Idle</span>
    <span className="w-[83px]">Top</span>
    <span className="w-[92px]">35.3500, 1.2700</span>
    <div className="flex gap-[7px]">
      <button type="button" className="h-[22px] w-[57px] border border-[#7d7d7d] bg-[#505050]">
        mm
      </button>
      <button type="button" className="h-[22px] w-[22px] border border-[#7d7d7d] bg-[#505050]">
        P
      </button>
      <button type="button" className="h-[22px] w-[22px] border border-[#7d7d7d] bg-[#505050]">
        A
      </button>
    </div>
    <div className="ml-auto flex items-center">
      <svg viewBox="0 0 16 16" className="mr-[7px] size-4">
        <path d="M0 0h16l-6 7v9H6V7z" fill="#fff" />
      </svg>
      <span className="w-[38px]">Off</span>
      <svg viewBox="0 0 16 16" className="mr-[7px] size-4">
        <path d="M3 3l11 12M14 1L2 14" stroke="#fff" strokeWidth="2.500" />
        <path d="M0 2l2 2 2-2-1-2c3 0 4 3 3 5L4 7C1 6 0 4 0 2zM10 10l3-1 3 4-2 3z" fill="#fff" />
      </svg>
      <span className="w-[69px]">Shape edit</span>
      <button type="button" className="mr-[14px] flex h-[22px] w-14 items-center justify-center gap-[6px] bg-[#00ff11] text-[#0b6a10]">
        <svg viewBox="0 0 14 12" className="h-3 w-[14px]">
          <path d="M7 0l7 12H0z" fill="#123a12" />
          <path d="M7 4v4M7 9v1.500" stroke="#00ff11" strokeWidth="1.300" />
        </svg>
        DRC
      </button>
      <svg viewBox="0 0 16 16" className="mr-[7px] size-4">
        <path d="M0 0l15 7-5 2 5 5-2 2-5-5-3 4z" fill="#fff" />
      </svg>
      <span className="w-2">0</span>
    </div>
  </footer>
);

const App = () => (
  <div className="flex h-screen flex-col overflow-hidden bg-[#2b2b2b] font-['Noto_Sans','Open_Sans',sans-serif] text-[11px] text-white">
    <TitleBar />
    <MenuBar />
    <ToolBar />
    <main className="flex min-h-0 flex-1">
      <aside className="flex w-[341px] shrink-0 flex-col border-r-[6px] border-[#434343]">
        <OptionsPanel />
        <FindPanel />
      </aside>
      <div className="flex min-w-0 flex-1 flex-col">
        <div className="flex h-[23px] shrink-0 gap-1">
          <button type="button" className="w-[60px] bg-[#777777]">
            Start Page
          </button>
          <button type="button" className="w-9 bg-[#0078d7]">
            DPAD
          </button>
        </div>
        <div className="min-h-0 flex-1 bg-black">
          <Board />
        </div>
      </div>
    </main>
    <StatusBar />
  </div>
);

export default App;
